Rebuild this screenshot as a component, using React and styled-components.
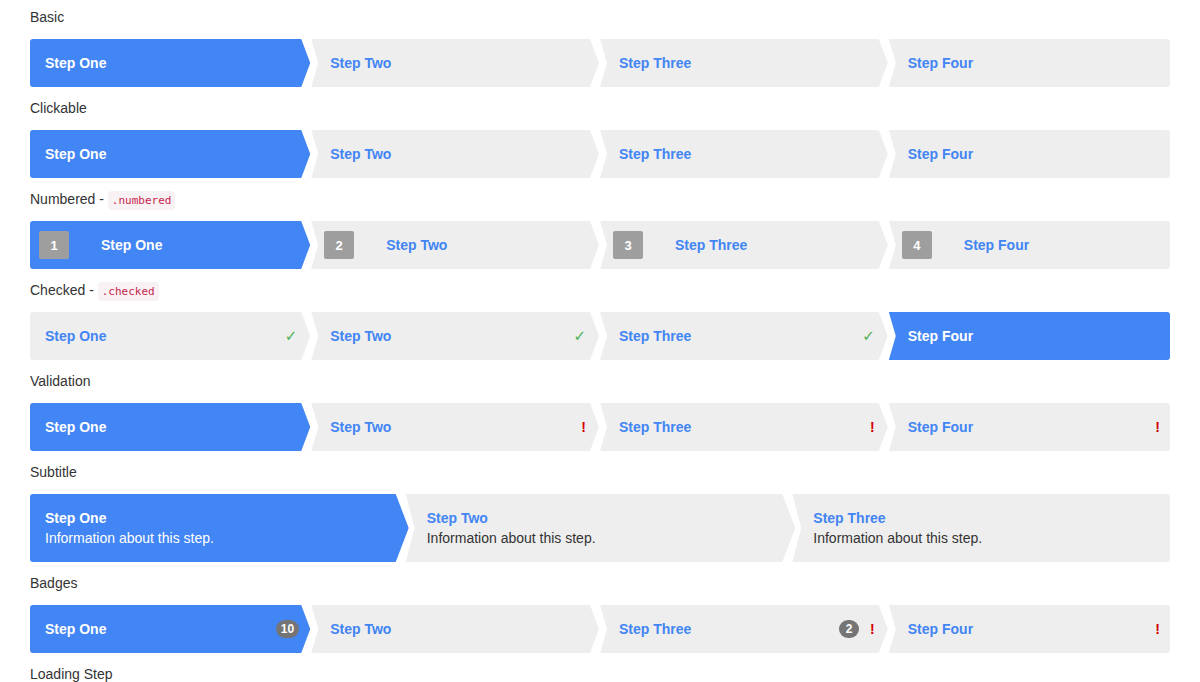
import React from "react";
import styled, { createGlobalStyle } from "styled-components";

const BLUE = "#4285f4";

const GlobalStyle = createGlobalStyle`
  body {
    margin: 0;
    background: #fff;
    font-family: "Liberation Sans", Arial, sans-serif;
    font-size: 14px;
    color: #333;
  }
`;

const Page = styled.div`
  padding: 0 30px;
`;

const Section = styled.section`
  padding-bottom: 4px;
`;

const Label = styled.div`
  height: 20px;
  line-height: 20px;
  padding: 7px 0 12px;
  font-size: 14px;
  color: #333;
`;

const Code = styled.code`
  font-family: "DejaVu Sans Mono", "Liberation Mono", monospace;
  font-size: 11px;
  color: #c7254e;
  background: #f9f2f4;
  border-radius: 4px;
  padding: 3px 4px;
`;

const Row = styled.div`
  display: flex;
  height: ${({ $tall }) => ($tall ? 68 : 48)}px;
`;

// tip depth / notch depth per row height
const geo = (tall) => (tall ? { t: 13, n: 9 } : { t: 9, n: 7 });

const shape = ({ $first, $last, $tall }) => {
  const { t, n } = geo($tall);
  if ($first)
    return `polygon(0 0, calc(100% - ${t}px) 0, 100% 50%, calc(100% - ${t}px) 100%, 0 100%)`;
  if ($last) return `polygon(0 0, 100% 0, 100% 100%, 0 100%, ${n}px 50%)`;
  return `polygon(0 0, calc(100% - ${t}px) 0, 100% 50%, calc(100% - ${t}px) 100%, 0 100%, ${n}px 50%)`;
};

const StepBox = styled.div`
  flex: ${({ $first, $last }) => ($first || $last ? 1 : 1.014)} 1 0;
  min-width: 0;
  display: flex;
  align-items: center;
  box-sizing: border-box;
  background: ${({ $active }) => ($active ? BLUE : "#eeeeee")};
  color: ${({ $active }) => ($active ? "#fff" : BLUE)};
  clip-path: ${shape};
  border-radius: ${({ $first, $last }) =>
    $first ? "3px 0 0 3px" : $last ? "0 3px 3px 0" : "0"};
  margin-left: ${({ $first, $tall }) => ($first ? 0 : 10 - geo($tall).t)}px;
  padding-left: ${({ $first, $tall, $numbered }) =>
    ($first ? 15 : geo($tall).n + 12) - ($numbered ? 6 : 0)}px;
  padding-right: ${({ $last, $tall }) => ($last ? 8 : geo($tall).t + 2)}px;
  font-weight: bold;
  font-size: 14px;
  white-space: nowrap;
`;

const Texts = styled.div`
  display: flex;
  flex-direction: column;
  line-height: 20px;
`;

const Sub = styled.span`
  font-weight: normal;
  color: ${({ $active }) => ($active ? "#fff" : "#333")};
`;

const Number = styled.span`
  width: 30px;
  height: 28px;
  border-radius: 2px;
  background: #9e9e9e;
  color: #fff;
  font-size: 13px;
  display: flex;
  align-items: center;
  justify-content: center;
  margin-right: 32px;
  flex-shrink: 0;
`;

const Extras = styled.span`
  margin-left: auto;
  display: flex;
  align-items: center;
  gap: 11px;
`;

const Check = styled.span`
  font-family: "DejaVu Sans", sans-serif;
  font-weight: normal;
  font-size: 15px;
  color: #4caf50;
  margin-right: 2px;
`;

const Bang = styled.span`
  font-weight: bold;
  font-size: 14px;
  color: #d50000;
  margin-right: 2px;
`;

const Badge = styled.span`
  min-width: 20px;
  height: 18px;
  padding: 0 5px;
  box-sizing: border-box;
  border-radius: 9px;
  background: #757575;
  color: #fff;
  font-size: 12px;
  font-weight: bold;
  display: flex;
  align-items: center;
  justify-content: center;
`;

const names = ["Step One", "Step Two", "Step Three", "Step Four"];

const Steps = ({ active = 0, count = 4, tall, render }) => (
  <Row $tall={tall}>
    {names.slice(0, count).map((name, i) => {
      const props = {
        $first: i === 0,
        $last: i === count - 1,
        $active: i === active,
        $tall: tall,
      };
      return render ? (
        render(name, i, props)
      ) : (
        <StepBox key={name} {...props}>
          {name}
        </StepBox>
      );
    })}
  </Row>
);

export default function App() {
  return (
    <Page>
      <GlobalStyle />
      <Section>
        <Label>Basic</Label>
        <Steps />
      </Section>

      <Section>
        <Label>Clickable</Label>
        <Steps />
      </Section>

      <Section>
        <Label>
          Numbered - <Code>.numbered</Code>
        </Label>
        <Steps
          render={(name, i, p) => (
            <StepBox key={name} {...p} $numbered>
              <Number>{i + 1}</Number>
              {name}
            </StepBox>
          )}
        />
      </Section>

      <Section>
        <Label>
          Checked - <Code>.checked</Code>
        </Label>
        <Steps
          active={3}
          render={(name, i, p) => (
            <StepBox key={name} {...p}>
              {name}
              {i < 3 && (
                <Extras>
                  <Check>✓</Check>
                </Extras>
              )}
            </StepBox>
          )}
        />
      </Section>

      <Section>
        <Label>Validation</Label>
        <Steps
          render={(name, i, p) => (
            <StepBox key={name} {...p}>
              {name}
              {i > 0 && (
                <Extras>
                  <Bang>!</Bang>
                </Extras>
              )}
            </StepBox>
          )}
        />
      </Section>

      <Section>
        <Label>Subtitle</Label>
        <Steps
          tall
          count={3}
          render={(name, i, p) => (
            <StepBox key={name} {...p}>
              <Texts>
                <span>{name}</span>
                <Sub $active={p.$active}>Information about this step.</Sub>
              </Texts>
            </StepBox>
          )}
        />
      </Section>

      <Section>
        <Label>Badges</Label>
        <Steps
          render={(name, i, p) => (
            <StepBox key={name} {...p}>
              {name}
              {i === 0 && (
                <Extras>
                  <Badge>10</Badge>
                </Extras>
              )}
              {i === 2 && (
                <Extras>
                  <Badge>2</Badge>
                  <Bang>!</Bang>
                </Extras>
              )}
              {i === 3 && (
                <Extras>
                  <Bang>!</Bang>
                </Extras>
              )}
            </StepBox>
          )}
        />
      </Section>

      <Section>
        <Label>Loading Step</Label>
      </Section>
    </Page>
  );
}
